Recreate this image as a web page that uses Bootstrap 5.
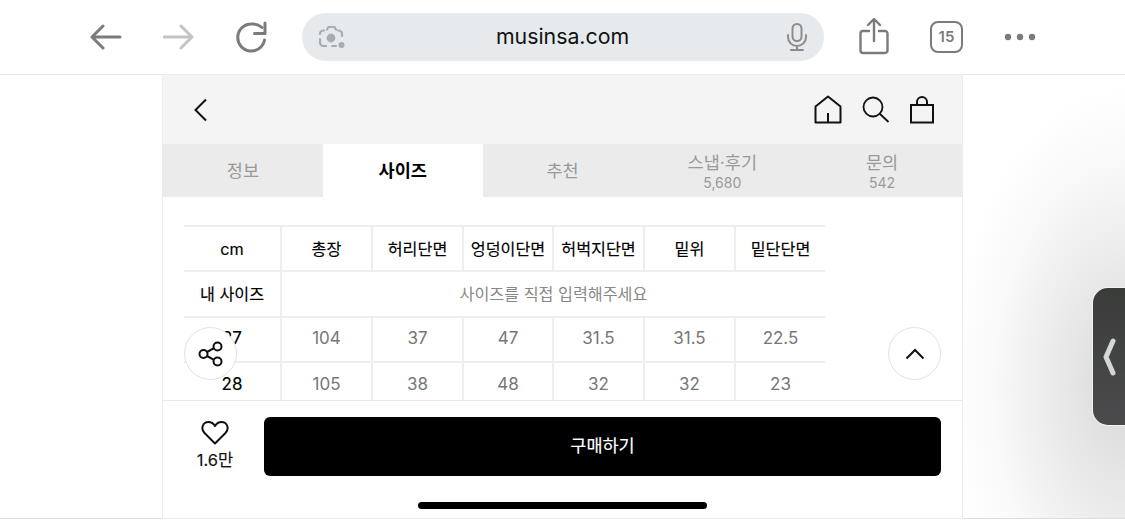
<!DOCTYPE html>
<html lang="ko">
<head>
<meta charset="utf-8">
<title>musinsa.com</title>
<link href="https://cdn.jsdelivr.net/npm/bootstrap@5.3.0/dist/css/bootstrap.min.css" rel="stylesheet">
<style>
html,body{height:520px;overflow:hidden;background:#fff;font-family:Inter,"Noto Sans CJK KR",sans-serif;}
.shell{width:1125px;height:520px;position:relative;overflow:hidden;}
.topbar{height:75px;border-bottom:1px solid #e4e4e4;background:#fff;padding-left:90px;}
.tb-ico{flex:none;display:block;}
.urlbar{width:522px;height:48px;border-radius:24px;background:#e7eaed;margin-left:35px;margin-right:35px;padding:0 14px 0 14px;font-size:21.3px;color:#111;}
.urltext{margin-right:9px;}
.stage{height:444px;background:radial-gradient(ellipse 175px 300px at 1125px 310px,#d8d8d8 0,#ececec 45%,#f9f9f9 75%,#fff 100%);border-bottom:1px solid #dedede;}
.phone{width:799px;margin-left:163px;height:443px;background:#fff;box-shadow:0 0 0 1px #ececec;}
.apphead{height:69px;background:#f4f4f4;padding:0 27px 0 30px;}
.tabrow{height:53px;background:#ebebeb;}
.tabcell{width:160px;height:53px;color:#999;font-size:17.5px;line-height:20px;text-align:center;}
.tabcell small{font-size:14px;line-height:16px;color:#999;margin-top:2px;margin-bottom:-2px;}
.tabcell.on{background:#fff;color:#000;font-weight:700;}
.scrollarea{height:204px;overflow:hidden;padding:28px 0 0 21px;border-bottom:1px solid #e8e8e8;}
.sizetbl{table-layout:fixed;border-collapse:collapse;width:641px;margin:0;}
.sizetbl td,.sizetbl th{height:45.3px;padding:0;border:2px solid #eeeeee;text-align:center;vertical-align:middle;color:#777;font-weight:400;font-size:17px;}
.sizetbl tr>*:first-child{border-left:0;}
.sizetbl tr>*:last-child{border-right:0;}
.sizetbl th{color:#000;font-size:16.2px;font-weight:400;-webkit-text-stroke:.15px #000;}
.sizetbl .lead-cell{font-size:17px;}
.sizetbl .note{font-size:16.2px;color:#888;}
.footbar{height:116px;padding:16px 21px 0 0;position:relative;}
.likebox{width:101px;font-size:16.5px;font-weight:400;color:#111;line-height:20px;padding:3px 0 0 3px;-webkit-text-stroke:.15px #111;}
.buybtn{flex:1;height:59px;background:#000;color:#fff;border:0;border-radius:6px;font-size:17.5px;font-weight:400;-webkit-text-stroke:.15px #fff;}
.homebar{position:absolute;left:255px;top:101px;width:289px;height:7px;border-radius:4px;background:#000;}
.floatbtn{position:absolute;top:327px;width:53px;height:53px;border-radius:50%;background:#fff;border:1px solid #e2e2e2;}
.float-l{left:184px;}
.float-r{left:888px;}
.handle{position:absolute;left:1093px;top:288px;width:40px;height:137px;border-radius:15px 0 0 15px;background:linear-gradient(180deg,#3a3c3a,#4b4b4d);box-shadow:0 0 0 1px #f2f2f2;}
.handle svg{margin-left:9px;}
</style>
</head>
<body>
<div class="shell">
  <div class="topbar d-flex align-items-center">
    <svg class="tb-ico" width="32" height="30" viewBox="0 0 32 30" fill="none" stroke="#7b7b7b" stroke-width="3" stroke-linecap="round" stroke-linejoin="round"><path d="M2 15H30M13 4 2 15l11 11"/></svg>
    <svg class="tb-ico" style="margin-left:41px" width="32" height="30" viewBox="0 0 32 30" fill="none" stroke="#c4c4c4" stroke-width="3" stroke-linecap="round" stroke-linejoin="round"><path d="M1 15H29M18 4l11 11-11 11"/></svg>
    <svg class="tb-ico" style="margin-left:40px" width="32" height="32" viewBox="0 0 32 32" fill="none" stroke="#7b7b7b" stroke-width="3" stroke-linecap="round" stroke-linejoin="round"><path d="M27 6.500A14 14 0 0 0 16 3 13.500 13.500 0 1 0 29.500 19"/><path d="M30 2v10.500H19.500"/></svg>
    <div class="urlbar d-flex align-items-center justify-content-between">
      <svg width="34" height="30" viewBox="0 0 34 30" fill="none" stroke="#a9adb0" stroke-width="2.200" stroke-linecap="round"><path d="M8 8.500C5 8.500 4 10 4 12M4 17v3c0 2.500 1 4 3.500 4H10M16 24h4M11 7.500l1.500-2.500h6l1.500 2.500M22 8.500c3 0 4 1.500 4 3.500v2"/><circle cx="15" cy="16" r="3.300" fill="#a9adb0"/><circle cx="25.500" cy="23" r="3" fill="#a9adb0" stroke="none"/></svg>
      <span class="urltext">musinsa.com</span>
      <svg width="26" height="30" viewBox="0 0 26 30" fill="none" stroke="#8c8c8c" stroke-width="2" stroke-linecap="round"><rect x="8.500" y="2" width="9" height="17" rx="4.500"/><path d="M4 13v2a9 9 0 0 0 18 0v-2M13 24v4M7 28h12"/></svg>
    </div>
    <svg class="tb-ico" width="30" height="38" viewBox="0 0 30 38" fill="none" stroke="#7b7b7b" stroke-width="2.400" stroke-linecap="round" stroke-linejoin="round"><path d="M10 13H4a2.500 2.500 0 0 0-2.500 2.500v17A2.500 2.500 0 0 0 4 35h22a2.500 2.500 0 0 0 2.500-2.500v-17A2.500 2.500 0 0 0 26 13h-6M15 23V2M9 7l6-6 6 6"/></svg>
    <div class="d-flex align-items-center justify-content-center" style="width:33px;height:32px;margin-left:41px;border:2.500px solid #7b7b7b;border-radius:8px;font-size:15px;font-weight:600;color:#7b7b7b;">15</div>
    <svg class="tb-ico" style="margin-left:41px" width="32" height="8" viewBox="0 0 32 8" fill="#7b7b7b"><circle cx="4" cy="4" r="3.200"/><circle cx="16" cy="4" r="3.200"/><circle cx="28" cy="4" r="3.200"/></svg>
  </div>
  <div class="stage">
    <div class="phone d-flex flex-column">
      <div class="apphead d-flex align-items-center justify-content-between">
        <svg width="16" height="24" viewBox="0 0 16 24" fill="none" stroke="#111" stroke-width="2"><path d="M13 1.500 2.500 12 13 22.500"/></svg>
        <div class="d-flex align-items-center" style="gap:20px">
          <svg width="28" height="29" viewBox="0 0 28 29" fill="none" stroke="#111" stroke-width="2" stroke-linejoin="round"><path d="M1.500 27.500V11.500L14 1.500l12.500 10v16ZM14 27.500V18"/></svg>
          <svg width="27" height="27" viewBox="0 0 27 27" fill="none" stroke="#111" stroke-width="1.800" stroke-linecap="round"><circle cx="11" cy="11" r="9.500"/><path d="m18 18 8 7.500"/></svg>
          <svg width="26" height="28" viewBox="0 0 26 28" fill="none" stroke="#111" stroke-width="2"><path d="M2 9h22v17.500H2ZM8 9V6a5 5 0 0 1 10 0v3"/></svg>
        </div>
      </div>
      <div class="tabrow d-flex">
        <div class="tabcell d-flex flex-column align-items-center justify-content-center">정보</div>
        <div class="tabcell on d-flex flex-column align-items-center justify-content-center">사이즈</div>
        <div class="tabcell d-flex flex-column align-items-center justify-content-center">추천</div>
        <div class="tabcell d-flex flex-column align-items-center justify-content-center">스냅·후기<small>5,680</small></div>
        <div class="tabcell d-flex flex-column align-items-center justify-content-center">문의<small>542</small></div>
      </div>
      <div class="scrollarea">
        <table class="sizetbl">
          <colgroup><col style="width:97px"><col style="width:91px"><col style="width:91px"><col style="width:90px"><col style="width:91px"><col style="width:91px"><col style="width:90px"></colgroup>
          <tr><th>cm</th><th>총장</th><th>허리단면</th><th>엉덩이단면</th><th>허벅지단면</th><th>밑위</th><th>밑단단면</th></tr>
          <tr><th>내 사이즈</th><td class="note" colspan="6">사이즈를 직접 입력해주세요</td></tr>
          <tr><th class="lead-cell">27</th><td>104</td><td>37</td><td>47</td><td>31.5</td><td>31.5</td><td>22.5</td></tr>
          <tr><th class="lead-cell">28</th><td>105</td><td>38</td><td>48</td><td>32</td><td>32</td><td>23</td></tr>
        </table>
      </div>
      <div class="footbar d-flex align-items-start">
        <div class="likebox d-flex flex-column align-items-center">
          <svg width="28" height="25" viewBox="0 0 28 25" fill="none" stroke="#111" stroke-width="2" stroke-linejoin="round"><path d="M14 23.500 3.500 13C-.500 9 1.500 2 7.500 2c3 0 5 1.500 6.500 4 1.500-2.500 3.500-4 6.500-4 6 0 8 7 4 11Z"/></svg>
          <span style="margin-top:5px">1.6만</span>
        </div>
        <button class="buybtn" type="button">구매하기</button>
        <div class="homebar"></div>
      </div>
    </div>
  </div>
  <div class="floatbtn float-l d-flex align-items-center justify-content-center">
    <svg width="26" height="26" viewBox="0 0 26 26" fill="none" stroke="#111" stroke-width="2"><circle cx="19.500" cy="5.500" r="4"/><circle cx="5.500" cy="13" r="4"/><circle cx="19.500" cy="20.500" r="4"/><path d="m9 11 7-3.800M9 15l7 3.800"/></svg>
  </div>
  <div class="floatbtn float-r d-flex align-items-center justify-content-center">
    <svg width="20" height="12" viewBox="0 0 20 12" fill="none" stroke="#111" stroke-width="2"><path d="m1.500 10.500 8.500-8.500 8.500 8.500"/></svg>
  </div>
  <div class="handle d-flex align-items-center">
    <svg width="15" height="38" viewBox="0 0 15 38" fill="none" stroke="#d6d6d6" stroke-width="5" stroke-linecap="round" stroke-linejoin="round"><path d="M11 3 4 19l7 16"/></svg>
  </div>
</div>
<script src="https://cdn.jsdelivr.net/npm/bootstrap@5.3.0/dist/js/bootstrap.bundle.min.js"></script>
</body>
</html>
